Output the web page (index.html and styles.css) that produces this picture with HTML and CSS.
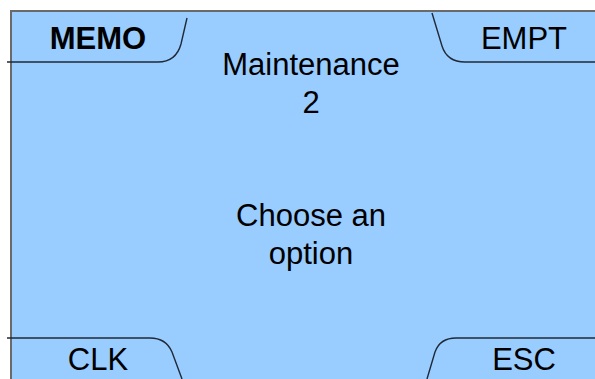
FILE: index.html
```html
<!DOCTYPE html>
<html lang="en">
<head>
    <meta charset="UTF-8">
    <title>Maintenance</title>
    <link rel="stylesheet" href="styles.css">
</head>
<body>
<div class="screen">
    <div class="top">
        <div class="tab tab-active">MEMO</div>
        <div class="title">Maintenance<br>2</div>
        <div class="tab">EMPT</div>
    </div>
    <div class="message">Choose an<br>option</div>
    <div class="bottom">
        <div class="tab">CLK</div>
        <div class="tab">ESC</div>
    </div>
</div>
<svg class="tabs" width="595" height="379" viewBox="0 0 595 379">
    <path d="M7 62 H158 Q176 62 181 44 L187 18"/>
    <path d="M432 13 L442 46 Q447 62 465 62 H595"/>
    <path d="M7 338 H150 Q166 338 172 352 L182 379"/>
    <path d="M595 338 H456 Q440 338 435 352 L427 379"/>
</svg>
</body>
</html>
```

FILE: styles.css
```css
body {
    margin: 0;
    background: #fff;
    font-family: "Liberation Sans", Arial, sans-serif;
    color: #000;
    overflow: hidden;
}
.screen {
    margin: 10px 0 0 10px;
    width: 600px;
    height: 369px;
    box-sizing: border-box;
    border-top: 2px solid #6a6a6a;
    border-left: 2px solid #6a6a6a;
    background: #99ccff;
    font-size: 31px;
    overflow: hidden;
}
.top {
    display: grid;
    grid-template-columns: 172px 1fr 172px;
    padding-top: 9px;
}
.top .title {
    text-align: center;
    padding-top: 25px;
    line-height: 38px;
}
.tab {
    text-align: center;
    line-height: 35px;
}
.tab-active {
    font-weight: bold;
}
.message {
    text-align: center;
    padding-top: 75px;
    line-height: 38px;
}
.bottom {
    display: flex;
    justify-content: space-between;
    padding-top: 69px;
}
.bottom .tab {
    width: 172px;
}
.tabs {
    position: absolute;
    left: 0;
    top: 0;
}
.tabs path {
    fill: none;
    stroke: #1f2a36;
    stroke-width: 1.4;
}
```
